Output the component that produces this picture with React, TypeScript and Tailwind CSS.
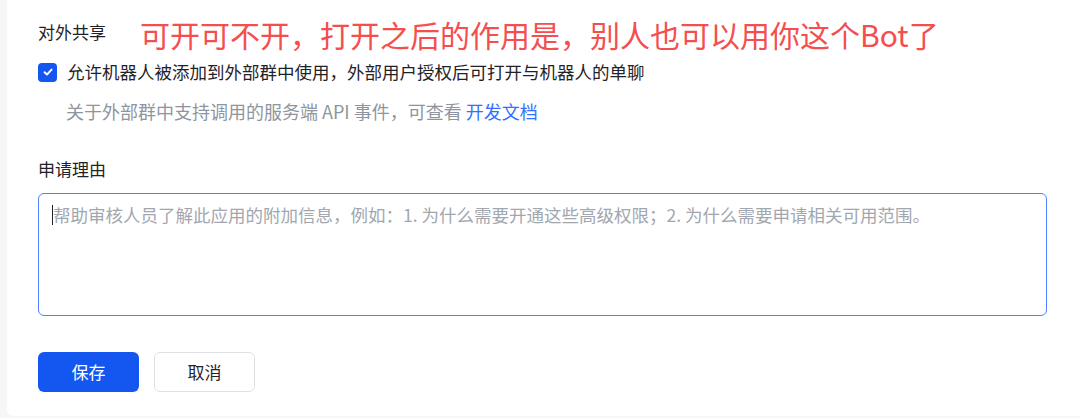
import React from "react";

export default function App() {
  const font = { fontFamily: '"Noto Sans CJK SC", "Noto Sans", sans-serif' };
  return (
    <div className="w-[1080px] h-[418px] bg-[#f5f6f7] pl-[7px] overflow-hidden" style={font}>
      <div className="h-[416px] bg-white rounded-bl-[6px] pl-[31px] pr-[33px] pt-[17px] text-[#1f2329]">
        <div className="flex items-center h-[36px]">
          <span className="text-[17px] leading-[24px] w-[102px] mb-[6px]">对外共享</span>
          <span className="text-[30px] leading-[36px] text-[#f54e4e] mb-[2px]">可开可不开，打开之后的作用是，别人也可以用你这个Bot了</span>
        </div>
        <div className="flex items-center mt-[7px] h-[24px]">
          <span className="w-[19px] h-[19px] rounded-[4px] bg-[#1456f0] flex items-center justify-center">
            <svg width="12" height="12" viewBox="0 0 12 12">
              <path d="M2.5 6.2 L5 8.5 L9.6 3.6" fill="none" stroke="white" strokeWidth="1.9" strokeLinecap="round" strokeLinejoin="round" />
            </svg>
          </span>
          <span className="ml-[10px] text-[17.5px] leading-[24px]">允许机器人被添加到外部群中使用，外部用户授权后可打开与机器人的单聊</span>
        </div>
        <div className="pl-[28px] mt-[15px] text-[18px] leading-[24px] text-[#8f959e]">
          关于外部群中支持调用的服务端 API 事件，可查看 <span className="text-[#3370ff]">开发文档</span>
        </div>
        <div className="mt-[34px] text-[17px] leading-[24px]">申请理由</div>
        <div className="mt-[12px] h-[123px] border border-[#4e83fd] rounded-[6px] pl-[13px] pr-[12px] pt-[9px]">
          <div className="flex items-center text-[17.5px] leading-[24px] text-[#a2a7af]">
            <span className="w-[1px] h-[20px] bg-[#1f2329]"></span>
            <span>帮助审核人员了解此应用的附加信息，例如：1. 为什么需要开通这些高级权限；2. 为什么需要申请相关可用范围。</span>
          </div>
        </div>
        <div className="flex gap-[15px] mt-[36px]">
          <button className="w-[101px] h-[40px] rounded-[6px] bg-[#1456f0] text-white text-[17px]">保存</button>
          <button className="w-[101px] h-[40px] rounded-[6px] border border-[#dee0e3] bg-white text-[#1f2329] text-[17px]">取消</button>
        </div>
      </div>
    </div>
  );
}
